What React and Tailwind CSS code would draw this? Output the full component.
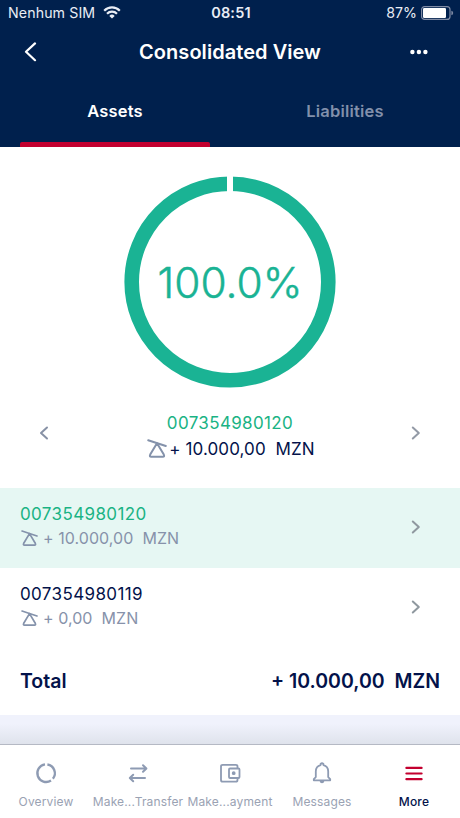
import React, { useState } from 'react';

const Chevron = ({ left, className = '' }) => (
  <svg width="12" height="16" viewBox="0 0 12 16" fill="none" stroke="currentColor" strokeWidth="2" strokeLinecap="round" strokeLinejoin="round" className={className}>
    <path d={left ? 'M9 2.5L3 8l6 5.5' : 'M2.8 2.5L8.8 8l-6 5.5'} />
  </svg>
);

// Tilted scale shown before every balance
const BalanceIcon = ({ size }) => (
  <svg width={size} height={size} viewBox="0 0 20 20" fill="none" stroke="currentColor" strokeWidth="2" strokeLinecap="round" strokeLinejoin="round" className="shrink-0 text-[#8492ab]">
    <path d="M1.2 1.2L18.8 7" />
    <path d="M10 4.2L3.2 15.6q-1 2.200 1 2.200h11.600q2 0 1-2.200z" />
  </svg>
);

const WifiIcon = () => (
  <svg width="18" height="13" viewBox="0 0 18 13" fill="none" stroke="currentColor" strokeWidth="2.2">
    <path d="M1.2 4.7a11 11 0 0 1 15.6 0" />
    <path d="M4 7.7a7 7 0 0 1 10 0" />
    <path d="M9 12.6L6.3 9.9a3.9 3.9 0 0 1 5.4 0z" fill="currentColor" stroke="none" />
  </svg>
);

const BatteryIcon = () => (
  <svg width="33" height="14" viewBox="0 0 33 14" fill="none">
    <rect x=".6" y=".6" width="28.4" height="12.8" rx="3" stroke="#7f8ba5" strokeWidth="1.2" />
    <rect x="2" y="2" width="23" height="10" rx="1.2" fill="#fff" />
    <path d="M30.4 4.8q1.8.5 1.8 2.2t-1.8 2.2z" fill="#7f8ba5" />
  </svg>
);

const OverviewIcon = () => (
  <svg width="24" height="24" viewBox="0 0 24 24" fill="none" stroke="currentColor" strokeWidth="2.3">
    <path d="M11 3.450A8.800 8.800 0 1 0 17 19.500" />
    <path d="M13.400 3.500A8.800 8.800 0 0 1 18.900 17.700" />
  </svg>
);

const TransferIcon = () => (
  <svg width="24" height="24" viewBox="0 0 24 24" fill="none" stroke="currentColor" strokeWidth="2" strokeLinecap="round" strokeLinejoin="round">
    <path d="M5 7.5h15M17 4.2L20.4 7.500l-3.400 3.300" />
    <path d="M19 17H4M7.200 13.700L3.800 17l3.400 3.300" />
  </svg>
);

const WalletIcon = () => (
  <svg width="24" height="24" viewBox="0 0 24 24" fill="none" stroke="currentColor" strokeWidth="1.8" strokeLinejoin="round">
    <path d="M19.500 7.500V5.500q0-1.700-1.700-1.700H4.700q-1.700 0-1.700 1.700v13.500q0 1.700 1.700 1.700h13.100q1.700 0 1.700-1.700V17" />
    <rect x="11" y="7.500" width="10.500" height="9.500" rx="1" />
    <circle cx="15.700" cy="12.200" r="1" fill="currentColor" />
  </svg>
);

const BellIcon = () => (
  <svg width="24" height="24" viewBox="0 0 24 24" fill="none" stroke="currentColor" strokeWidth="1.8" strokeLinejoin="round">
    <path d="M3.800 19.300v-1.200l2-2V10.500q0-5.300 4.800-6.400V3q1.400-1.400 2.800 0v1.100q4.800 1.100 4.800 6.400v5.600l2 2v1.200z" />
    <path d="M9.600 20h4.800q-.4 2.200-2.400 2.200t-2.400-2.200z" fill="currentColor" stroke="none" />
  </svg>
);

const MoreIcon = () => (
  <svg width="24" height="24" viewBox="0 0 24 24" fill="none" stroke="currentColor" strokeWidth="2.2" strokeLinecap="round">
    <path d="M4.4 6.9h15.2M4.4 12.500h15.200M4.400 18.200h15.200" />
  </svg>
);

const ACCOUNTS = [
  { number: '007354980120', amount: '+ 10.000,00' },
  { number: '007354980119', amount: '+ 0,00' },
];

const NAV = [
  { label: 'Overview', icon: OverviewIcon },
  { label: 'Make...Transfer', icon: TransferIcon },
  { label: 'Make...ayment', icon: WalletIcon },
  { label: 'Messages', icon: BellIcon },
  { label: 'More', icon: MoreIcon, active: true },
];

const App = () => {
  const [tab, setTab] = useState('Assets');
  const [selected, setSelected] = useState(0);
  const account = ACCOUNTS[selected];

  return (
    <div className="h-[818px] w-[460px] flex flex-col overflow-hidden bg-white font-['Inter',sans-serif] text-[#03124a]">
      <header className="h-[147px] shrink-0 flex flex-col bg-[#00204d] text-white">
        {/* Status bar */}
        <div className="h-[26px] grid grid-cols-3 items-center pl-2 pr-1.5 text-[14.2px] leading-none text-[#e9edf5]">
          <div className="flex items-center gap-2">
            <span className="whitespace-nowrap tracking-[0.1px]">Nenhum SIM</span>
            <WifiIcon />
          </div>
          <span className="text-center text-[14.5px] font-semibold tracking-[0.2px]">08:51</span>
          <div className="flex items-center justify-end gap-1">
            <span>87%</span>
            <BatteryIcon />
          </div>
        </div>

        <div className="h-[51px] grid grid-cols-[60px_1fr_60px] items-center">
          <button className="flex justify-center">
            <svg width="14" height="20" viewBox="0 0 14 20" fill="none" stroke="currentColor" strokeWidth="2.2" strokeLinecap="round" strokeLinejoin="round">
              <path d="M12 1.4L3 9.8l9 8.4" />
            </svg>
          </button>
          <h1 className="text-center text-[20px] font-semibold tracking-[0.05px]">Consolidated View</h1>
          <button className="pl-[10px]">
            <svg width="18" height="6" viewBox="0 0 18 6" fill="currentColor">
              <circle cx="2.4" cy="3" r="2.2" />
              <circle cx="8.9" cy="3" r="2.2" />
              <circle cx="15.4" cy="3" r="2.2" />
            </svg>
          </button>
        </div>

        <div className="flex-1 flex px-5">
          {['Assets', 'Liabilities'].map((name) => (
            <button
              key={name}
              onClick={() => setTab(name)}
              className={`w-[190px] last:ml-auto flex flex-col text-[16.5px] font-semibold tracking-[0.2px] ${tab === name ? 'text-white' : 'text-[#8290ab]'}`}
            >
              <span className="flex-1 w-full flex items-center justify-center pt-[3px]">{name}</span>
              <span className={`h-[5px] w-full rounded-t-xs ${tab === name ? 'bg-[#c3002f]' : ''}`} />
            </button>
          ))}
        </div>
      </header>

      {/* Chart */}
      <section className="h-[341px] shrink-0 flex flex-col items-center pt-[29px]">
        <svg width="212" height="212" viewBox="0 0 212 212">
          <circle cx="106" cy="106" r="98.3" fill="none" stroke="#1ab394" strokeWidth="14.6" />
          <rect x="103" y="0" width="6" height="18" fill="#fff" />
          <text x="106" y="121.5" textAnchor="middle" fontSize="42.4" fontWeight="300" fill="#1ab394" stroke="#1ab394" strokeWidth="0.5">100.0%</text>
        </svg>
        <div className="mt-[22px] w-full flex items-center justify-between px-[38px]">
          <button className="pb-[6px]" onClick={() => setSelected(0)}><Chevron left className="text-[#8791a5]" /></button>
          <div className="flex flex-col items-center leading-[26px] text-[17px]">
            <span className="tracking-[0.35px] text-[#1ab384]">{account.number}</span>
            <span className="flex items-center gap-0.5 pl-[2px]">
              <BalanceIcon size={20} />
              <span className="whitespace-pre tracking-[0.1px]">{account.amount}  MZN</span>
            </span>
          </div>
          <button className="pb-[6px]" onClick={() => setSelected(1)}><Chevron className="text-[#939aa6]" /></button>
        </div>
      </section>

      {/* Account list */}
      {ACCOUNTS.map((acc, i) => (
        <button
          key={acc.number}
          onClick={() => setSelected(i)}
          className={`h-20 shrink-0 flex items-center justify-between pl-5 pr-[38px] text-left ${i === selected ? 'bg-[#e6f7f3]' : 'bg-white'}`}
        >
          <div className="flex flex-col pb-1 leading-6">
            <span className={`text-[17px] tracking-[0.37px] ${i === selected ? 'text-[#1ab384]' : ''}`}>{acc.number}</span>
            <span className="flex items-center gap-[5px] pl-px text-[16px] text-[#8792aa]">
              <BalanceIcon size={17} />
              <span className="whitespace-pre tracking-[0.05px]">{acc.amount}  MZN</span>
            </span>
          </div>
          <Chevron className="mb-0.5 text-[#8f989f]" />
        </button>
      ))}

      <div className="h-[67px] shrink-0 flex items-center justify-between px-5 text-[19.5px] font-semibold">
        <span>Total</span>
        <span className="whitespace-pre">+ 10.000,00  MZN</span>
      </div>

      <div className="flex-1 bg-linear-to-b from-[#f0f2fc] from-30% to-[#dfe3ec]" />

      <nav className="h-[74px] shrink-0 grid grid-cols-5 border-t border-[#b5b9c4] bg-white pt-[16px]">
        {NAV.map(({ label, icon: Icon, active }) => (
          <button key={label} className={`flex flex-col items-center ${active ? 'text-[#c3002f]' : 'text-[#8e9bb3]'}`}>
            <Icon />
            <span className={`mt-[9px] whitespace-nowrap text-[12px] leading-4 tracking-[0.15px] ${active ? 'font-medium text-[#03124a]' : 'text-[#9aa2b3]'}`}>{label}</span>
          </button>
        ))}
      </nav>
    </div>
  );
};

export default App;
